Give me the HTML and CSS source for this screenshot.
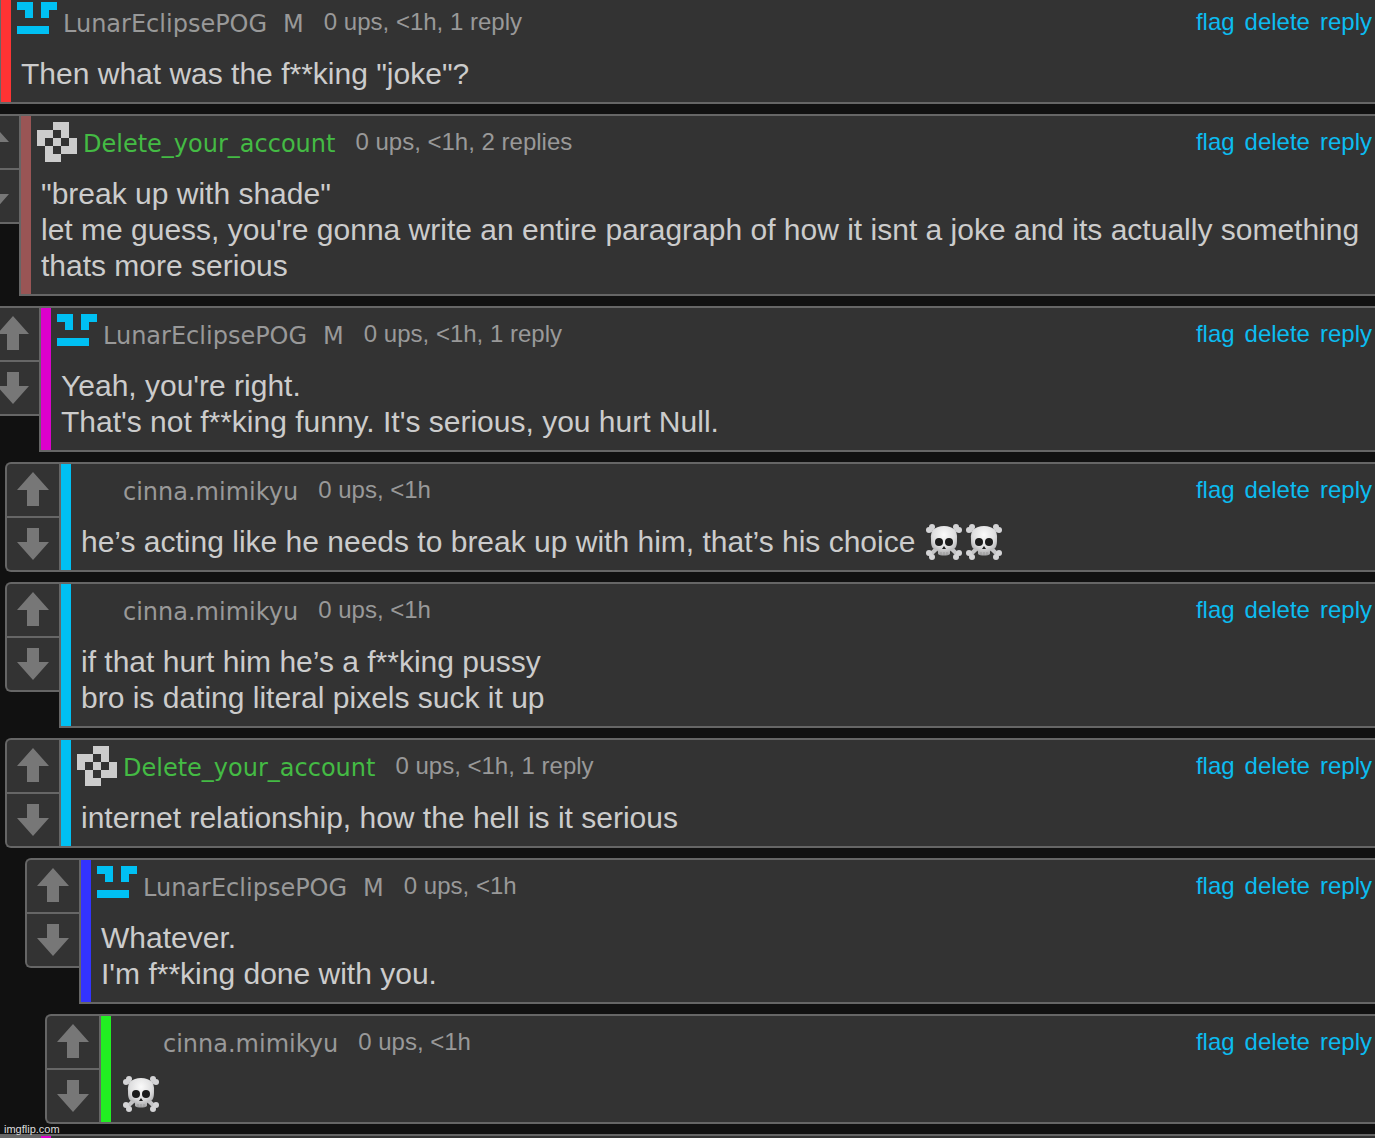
FILE: index.html
```html
<!DOCTYPE html>
<html lang="en">
<head>
    <meta charset="UTF-8">
    <meta name="viewport" content="width=device-width, initial-scale=1.0">
    <title>Comments</title>
    <link rel="stylesheet" href="styles.css">
</head>
<body>
    <!-- Shared icons -->
    <svg class="sprite" width="0" height="0" aria-hidden="true">
        <defs>
            <radialGradient id="bone" cx="50%" cy="30%" r="70%">
                <stop offset="0" stop-color="#fafafa"/>
                <stop offset="0.6" stop-color="#dededf"/>
                <stop offset="1" stop-color="#a4a4a6"/>
            </radialGradient>
        </defs>
        <symbol id="up" viewBox="0 0 32 36">
            <path d="M16 0L32 18H22V34H10V18H0Z"/>
        </symbol>
        <symbol id="down" viewBox="0 0 32 32">
            <path d="M10 0H22V14H32L16 32L0 14H10Z"/>
        </symbol>
        <symbol id="face" viewBox="0 0 5 5">
            <path d="M0 0H2V2H1V1H0ZM3 0H5V1H4V2H3ZM0 3H4V4H0Z"/>
        </symbol>
        <symbol id="pinwheel" viewBox="0 0 5 5">
            <path d="M2 0H4V2H3V1H2ZM0 1H2V2H1V3H0ZM2 2H3V3H2ZM4 2H5V4H3V3H4ZM1 3H2V4H3V5H1Z"/>
        </symbol>
        <symbol id="skull" viewBox="0 0 40 36">
            <path d="M6 4L34 31M34 4L6 31" stroke="#c4c4c6" stroke-width="4"/>
            <g fill="#d4d4d6">
                <circle cx="5" cy="6" r="3"/><circle cx="8" cy="3" r="3"/>
                <circle cx="35" cy="6" r="3"/><circle cx="32" cy="3" r="3"/>
                <circle cx="5" cy="29" r="3"/><circle cx="8" cy="33" r="3"/>
                <circle cx="35" cy="29" r="3"/><circle cx="32" cy="33" r="3"/>
            </g>
            <path fill="url(#bone)" d="M20 2C11 2 6 7 7 15C7 19 7 23 10 25C12 26 14 26 14 28V30C16 32 24 32 26 30V28C26 26 28 26 30 25C33 23 33 19 33 15C34 7 29 2 20 2Z"/>
            <path d="M17 28V31M20 28V31M23 28V31" stroke="#999" stroke-width="1"/>
            <g fill="#1c1c1c">
                <ellipse cx="15" cy="18" rx="4" ry="4"/>
                <ellipse cx="25" cy="18" rx="4" ry="4"/>
                <path d="M20 22L22 25H18Z"/>
            </g>
        </symbol>
    </svg>

    <main class="thread">
        <article class="comment level-0">
            <div class="votes">
                <button type="button" aria-label="Upvote"><svg class="arrow-up"><use href="#up"/></svg></button>
                <button type="button" aria-label="Downvote"><svg class="arrow-down"><use href="#down"/></svg></button>
            </div>
            <div class="card red">
                <header class="info">
                    <svg class="avatar blue-icon"><use href="#face"/></svg>
                    <span class="user">LunarEclipsePOG</span>
                    <span class="user mod">M</span>
                    <span class="meta">0 ups, &lt;1h, 1 reply</span>
                    <nav class="actions"><a href="#">flag</a><a href="#">delete</a><a href="#">reply</a></nav>
                </header>
                <p class="text">Then what was the f**king "joke"?</p>
            </div>
        </article>

        <article class="comment level-1">
            <div class="votes">
                <button type="button" aria-label="Upvote"><svg class="arrow-up"><use href="#up"/></svg></button>
                <button type="button" aria-label="Downvote"><svg class="arrow-down"><use href="#down"/></svg></button>
            </div>
            <div class="card brown">
                <header class="info">
                    <svg class="avatar"><use href="#pinwheel"/></svg>
                    <span class="user green-name">Delete_your_account</span>
                    <span class="meta">0 ups, &lt;1h, 2 replies</span>
                    <nav class="actions"><a href="#">flag</a><a href="#">delete</a><a href="#">reply</a></nav>
                </header>
                <p class="text">"break up with shade"<br>let me guess, you're gonna write an entire paragraph of how it isnt a joke and its actually something thats more serious</p>
            </div>
        </article>

        <article class="comment level-2">
            <div class="votes">
                <button type="button" aria-label="Upvote"><svg class="arrow-up"><use href="#up"/></svg></button>
                <button type="button" aria-label="Downvote"><svg class="arrow-down"><use href="#down"/></svg></button>
            </div>
            <div class="card magenta">
                <header class="info">
                    <svg class="avatar blue-icon"><use href="#face"/></svg>
                    <span class="user">LunarEclipsePOG</span>
                    <span class="user mod">M</span>
                    <span class="meta">0 ups, &lt;1h, 1 reply</span>
                    <nav class="actions"><a href="#">flag</a><a href="#">delete</a><a href="#">reply</a></nav>
                </header>
                <p class="text">Yeah, you're right.<br>That's not f**king funny. It's serious, you hurt Null.</p>
            </div>
        </article>

        <article class="comment level-3">
            <div class="votes">
                <button type="button" aria-label="Upvote"><svg class="arrow-up"><use href="#up"/></svg></button>
                <button type="button" aria-label="Downvote"><svg class="arrow-down"><use href="#down"/></svg></button>
            </div>
            <div class="card cyan">
                <header class="info">
                    <span class="avatar"></span>
                    <span class="user">cinna.mimikyu</span>
                    <span class="meta">0 ups, &lt;1h</span>
                    <nav class="actions"><a href="#">flag</a><a href="#">delete</a><a href="#">reply</a></nav>
                </header>
                <p class="text">he’s acting like he needs to break up with him, that’s his choice <svg class="emoji" role="img" aria-label="skull and crossbones"><use href="#skull"/></svg><svg class="emoji" role="img" aria-label="skull and crossbones"><use href="#skull"/></svg></p>
            </div>
        </article>

        <article class="comment level-3">
            <div class="votes">
                <button type="button" aria-label="Upvote"><svg class="arrow-up"><use href="#up"/></svg></button>
                <button type="button" aria-label="Downvote"><svg class="arrow-down"><use href="#down"/></svg></button>
            </div>
            <div class="card cyan">
                <header class="info">
                    <span class="avatar"></span>
                    <span class="user">cinna.mimikyu</span>
                    <span class="meta">0 ups, &lt;1h</span>
                    <nav class="actions"><a href="#">flag</a><a href="#">delete</a><a href="#">reply</a></nav>
                </header>
                <p class="text">if that hurt him he’s a f**king pussy<br>bro is dating literal pixels suck it up</p>
            </div>
        </article>

        <article class="comment level-3">
            <div class="votes">
                <button type="button" aria-label="Upvote"><svg class="arrow-up"><use href="#up"/></svg></button>
                <button type="button" aria-label="Downvote"><svg class="arrow-down"><use href="#down"/></svg></button>
            </div>
            <div class="card cyan">
                <header class="info">
                    <svg class="avatar"><use href="#pinwheel"/></svg>
                    <span class="user green-name">Delete_your_account</span>
                    <span class="meta">0 ups, &lt;1h, 1 reply</span>
                    <nav class="actions"><a href="#">flag</a><a href="#">delete</a><a href="#">reply</a></nav>
                </header>
                <p class="text">internet relationship, how the hell is it serious</p>
            </div>
        </article>

        <article class="comment level-4">
            <div class="votes">
                <button type="button" aria-label="Upvote"><svg class="arrow-up"><use href="#up"/></svg></button>
                <button type="button" aria-label="Downvote"><svg class="arrow-down"><use href="#down"/></svg></button>
            </div>
            <div class="card blue">
                <header class="info">
                    <svg class="avatar blue-icon"><use href="#face"/></svg>
                    <span class="user">LunarEclipsePOG</span>
                    <span class="user mod">M</span>
                    <span class="meta">0 ups, &lt;1h</span>
                    <nav class="actions"><a href="#">flag</a><a href="#">delete</a><a href="#">reply</a></nav>
                </header>
                <p class="text">Whatever.<br>I'm f**king done with you.</p>
            </div>
        </article>

        <article class="comment level-5">
            <div class="votes">
                <button type="button" aria-label="Upvote"><svg class="arrow-up"><use href="#up"/></svg></button>
                <button type="button" aria-label="Downvote"><svg class="arrow-down"><use href="#down"/></svg></button>
            </div>
            <div class="card green">
                <header class="info">
                    <span class="avatar"></span>
                    <span class="user">cinna.mimikyu</span>
                    <span class="meta">0 ups, &lt;1h</span>
                    <nav class="actions"><a href="#">flag</a><a href="#">delete</a><a href="#">reply</a></nav>
                </header>
                <p class="text"><svg class="emoji" role="img" aria-label="skull and crossbones"><use href="#skull"/></svg></p>
            </div>
        </article>

        <article class="comment level-2">
            <div class="votes"></div>
            <div class="card magenta"></div>
        </article>
    </main>
    <small class="watermark">imgflip.com</small>
</body>
</html>
```
FILE: styles.css
```css
* {
    box-sizing: border-box;
}
body {
    position: relative;
    margin: 0;
    height: 100vh;
    overflow: hidden;
    background-color: #111;
    color: #ccc;
    font-family: "Liberation Sans", Arial, sans-serif;
}
.sprite {
    position: absolute;
}
.thread {
    display: flex;
    flex-direction: column;
    gap: 10px;
    margin-top: -6px;
}

/* Comment rows, each reply level is 20px further in */
.comment {
    display: flex;
    align-items: flex-start;
}
.level-0 { margin-left: -55px; }
.level-1 { margin-left: -35px; }
.level-2 { margin-left: -15px; }
.level-3 { margin-left: 5px; }
.level-4 { margin-left: 25px; }
.level-5 { margin-left: 45px; }

.votes {
    flex: none;
    width: 54px;
    border: 2px solid #666;
    border-right: none;
    border-radius: 6px 0 0 6px;
    background-color: #333;
}
.votes button {
    display: flex;
    align-items: center;
    justify-content: center;
    width: 100%;
    height: 52px;
    padding: 0;
    border: none;
    background: none;
    cursor: pointer;
}
.votes button + button {
    height: 54px;
    border-top: 2px solid #666;
}
.votes svg {
    width: 32px;
    fill: #777;
}
.arrow-up {
    height: 36px;
}
.arrow-down {
    height: 32px;
}

.card {
    flex: 1;
    min-width: 0;
    padding: 0 0 10px 10px;
    border: 2px solid #666;
    border-right: none;
    background: linear-gradient(currentColor, currentColor) left / 10px 100% no-repeat #333;
}
.red { color: #ff3333; }
.brown { color: #995555; }
.magenta { color: #dd00cc; }
.cyan { color: #00c0f3; }
.blue { color: #3333ff; }
.green { color: #22ee22; }

.info {
    display: flex;
    align-items: flex-start;
    height: 60px;
    padding: 6px 3px 0 6px;
    color: #999;
    font-size: 24px;
    line-height: 40px;
    white-space: nowrap;
}
.avatar {
    flex: none;
    width: 40px;
    height: 40px;
    margin-right: 6px;
    fill: #ccc;
}
.blue-icon {
    fill: #00c0f3;
}
.user {
    margin-right: 20px;
    font-family: "DejaVu Sans", Verdana, sans-serif;
    line-height: 44px;
}
.mod {
    margin-left: -4px;
}
.green-name {
    color: #44bb44;
}
.actions {
    display: flex;
    gap: 10px;
    margin-left: auto;
}
.actions a {
    color: #0cbcf0;
    text-decoration: none;
}
.text {
    margin: 0;
    padding: 0 10px;
    color: #ccc;
    font-size: 30px;
    line-height: 36px;
}
.emoji {
    width: 40px;
    height: 36px;
    vertical-align: top;
}
.watermark {
    position: absolute;
    left: 4px;
    bottom: 2px;
    color: #ddd;
    font-size: 11px;
    line-height: 13px;
}
```
